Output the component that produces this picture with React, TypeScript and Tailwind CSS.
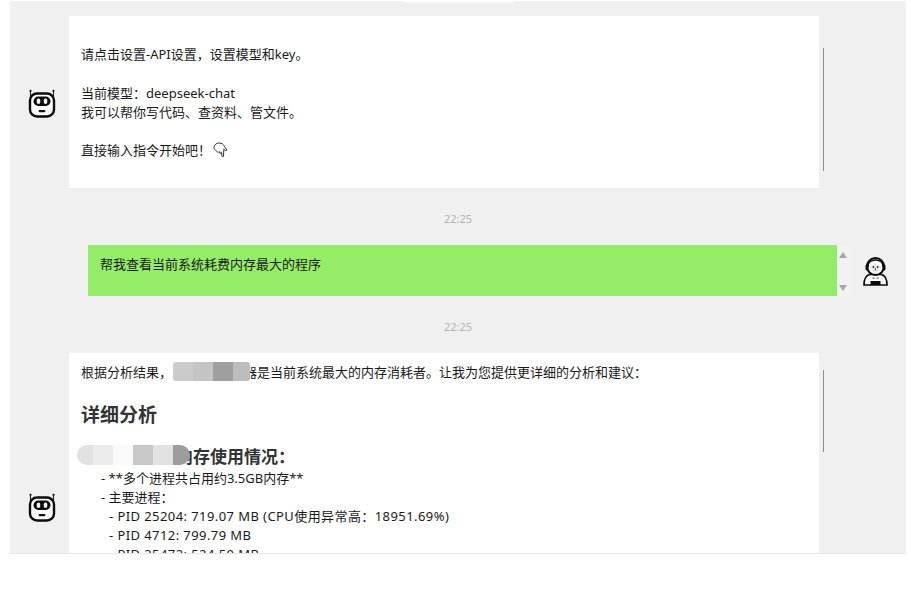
const font = { fontFamily: '"Noto Sans", "Noto Sans CJK SC", sans-serif' };

function RobotIcon() {
  return (
    <svg width="28" height="29" viewBox="0 0 28 29" fill="none" className="shrink-0">
      <path d="M2.500 1.500v6M25.500 1.500v6" stroke="#222" strokeWidth="1.100" />
      <circle cx="2.500" cy="1.800" r="1.100" fill="#111" />
      <circle cx="25.500" cy="1.800" r="1.100" fill="#111" />
      <rect x="2" y="4.500" width="24" height="23" rx="7" fill="#fff" stroke="#0b0b0b" strokeWidth="2.400" />
      <rect x="5.500" y="7.500" width="17" height="9.500" rx="4.700" fill="#0b0b0b" />
      <rect x="8.800" y="9.500" width="3.400" height="5.400" rx="1.700" fill="#fff" />
      <rect x="15.800" y="9.500" width="3.400" height="5.400" rx="1.700" fill="#fff" />
      <rect x="10.500" y="21" width="7" height="2.200" rx="1.100" fill="#111" />
    </svg>
  );
}

function AstronautIcon() {
  return (
    <svg width="25" height="29" viewBox="0 0 25 29" fill="none" className="shrink-0">
      <path d="M1 28c0-6 2-9.500 5.500-10.500h12C22 18.500 24 22 24 28z" fill="#fff" stroke="#0b0b0b" strokeWidth="1.700" />
      <circle cx="12.500" cy="9.500" r="8.500" fill="#fff" stroke="#0b0b0b" strokeWidth="2" />
      <path d="M5 10c0-4.500 3.200-7 7.500-7s7.500 2.500 7.500 7" stroke="#0b0b0b" strokeWidth="1.400" />
      <rect x="2.500" y="7.500" width="3" height="6" rx="1.400" fill="#0b0b0b" />
      <rect x="19.500" y="7.500" width="3" height="6" rx="1.400" fill="#0b0b0b" />
      <path d="M7 9c2-.5 3.500-1.500 5-3 1.500 1.500 3.500 2.500 6 3 0 4-2.400 7-5.500 7S7 13 7 9z" fill="#e6eff6" />
      <circle cx="10.400" cy="10" r=".9" fill="#222" />
      <circle cx="14.600" cy="10" r=".9" fill="#222" />
      <path d="M12.500 11v2.500" stroke="#a9552f" strokeWidth="1.200" />
      <rect x="7.500" y="24" width="10" height="4" fill="#0b0b0b" />
      <path d="M9.500 21h2M13.500 21h2" stroke="#333" strokeWidth="1.100" />
    </svg>
  );
}

function HandDown() {
  return (
    <svg width="15" height="16" viewBox="0 0 15 16" fill="none" className="ml-[2px] inline-block align-[-3px]">
      <path
        d="M1 5.500C1.300 2.600 3.400 1 6 1c2.800 0 4.500 1.200 5.500 3.500l2.200 3.300c.3.700-.5 1.300-1.200.8L10.800 7.300l-.3 6.700c0 1-1.500 1-1.600 0l-.2-3.600H8l.1.600c0 .8-1.200.8-1.300 0l-.1-1.300c-1.200.9-2.200.500-3-.4C2 7.900 1 7 1 5.500z"
        fill="#fff"
        stroke="#333"
        strokeWidth="1"
      />
      <path d="M9 14.500h1.300" stroke="#5b4bc4" strokeWidth="1" />
    </svg>
  );
}

export default function App() {
  return (
    <div className="h-[589px] w-[911px] overflow-hidden bg-white pl-[10px] pt-[1px] text-[13px] leading-[19px] text-[#1a1a1a]" style={font}>
      <div className="relative h-[553px] w-[896px] overflow-hidden border-b border-[#e6e6e6] bg-[#f0f0f0] pt-[15px]">
        {/* blurred caption at the very top */}
        <div className="absolute left-[394px] top-[-1px] h-[3px] w-[110px] rounded-sm bg-[#fafafa] blur-[1px]" />

        <div className="flex items-center">
          <div className="flex w-[59px] justify-center pl-[4px] pt-[3px]">
            <RobotIcon />
          </div>
          <div className="h-[172px] w-[750px] bg-white pl-[12px] pt-[29px]">
            <p>请点击设置-API设置，设置模型和key。</p>
            <p className="mt-[20px]">当前模型：deepseek-chat</p>
            <p>我可以帮你写代码、查资料、管文件。</p>
            <p className="mt-[19px]">
              直接输入指令开始吧！
              <HandDown />
            </p>
          </div>
          <div className="ml-[4px] mt-[32px] h-[123px] w-[1px] shrink-0 self-start bg-[#8c8c8c]" />
        </div>

        <div className="flex h-[57px] items-center justify-center pt-[3px] text-[11px] text-[#b3b3b3]">22:25</div>

        <div className="flex items-center">
          <div className="ml-[78px] h-[51px] w-[749px] bg-[#95ec69] px-[12px] pt-[10px]">帮我查看当前系统耗费内存最大的程序</div>
          <div className="flex h-[51px] w-[12px] flex-col items-center justify-between bg-[#f2f2f2] pb-[5px] pt-[7px]">
            <div className="h-0 w-0 border-x-[4px] border-b-[6px] border-x-transparent border-b-[#a6a6a6]" />
            <div className="h-0 w-0 border-x-[4px] border-t-[6px] border-x-transparent border-t-[#a6a6a6]" />
          </div>
          <div className="ml-[14px] pt-[2px]">
            <AstronautIcon />
          </div>
        </div>

        <div className="flex h-[57px] items-center justify-center pt-[4px] text-[11px] text-[#b3b3b3]">22:25</div>

        <div className="flex items-center">
          <div className="flex w-[59px] justify-center pl-[4px]">
            <RobotIcon />
          </div>
          <div className="relative h-[308px] w-[750px] bg-white pl-[12px] pt-[10px]">
            <p>
              根据分析结果，<span className="pl-[7px]">某某某某某器</span>是当前系统最大的内存消耗者。让我为您提供更详细的分析和建议：
            </p>
            <h2 className="mt-[20px] text-[19px] leading-[26px] font-bold text-[#333]">详细分析</h2>
            <h3 className="mt-[17px] pl-[10px] text-[17px] leading-[24px] font-bold text-[#333]">某某某某某内存使用情况：</h3>
            <div className="pl-[20px]">
              <p>- **多个进程共占用约3.5GB内存**</p>
              <p>- 主要进程：</p>
              <p className="pl-[8px] tracking-[0.42px]">- PID 25204: 719.07 MB (CPU使用异常高：18951.69%)</p>
              <p className="pl-[8px] tracking-[0.42px]">- PID 4712: 799.79 MB</p>
              <p className="pl-[8px] tracking-[0.42px]">- PID 35472: 524.59 MB</p>
            </div>

            {/* mosaic over the redacted process name */}
            <div className="absolute left-[104px] top-[9px] flex h-[19px] overflow-hidden rounded-[3px]">
              <div className="w-[20px] bg-[#cbcbcb]" />
              <div className="w-[20px] bg-[#c4c4c4]" />
              <div className="w-[20px] bg-[#9f9f9f]" />
              <div className="w-[17px] bg-[#bdbdbd]" />
            </div>
            <div className="absolute left-[8px] top-[92px] flex h-[20px] overflow-hidden rounded-full">
              <div className="w-[16px] bg-[#e1e1e1]" />
              <div className="w-[20px] bg-[#ececec]" />
              <div className="w-[20px] bg-[#fafafa]" />
              <div className="w-[20px] bg-[#c8c8c8]" />
              <div className="w-[20px] bg-[#e2e2e2]" />
              <div className="w-[17px] bg-[#9d9d9d]" />
            </div>
          </div>
          <div className="ml-[4px] mt-[17px] h-[82px] w-[1px] shrink-0 self-start bg-[#8c8c8c]" />
        </div>
      </div>
    </div>
  );
}
